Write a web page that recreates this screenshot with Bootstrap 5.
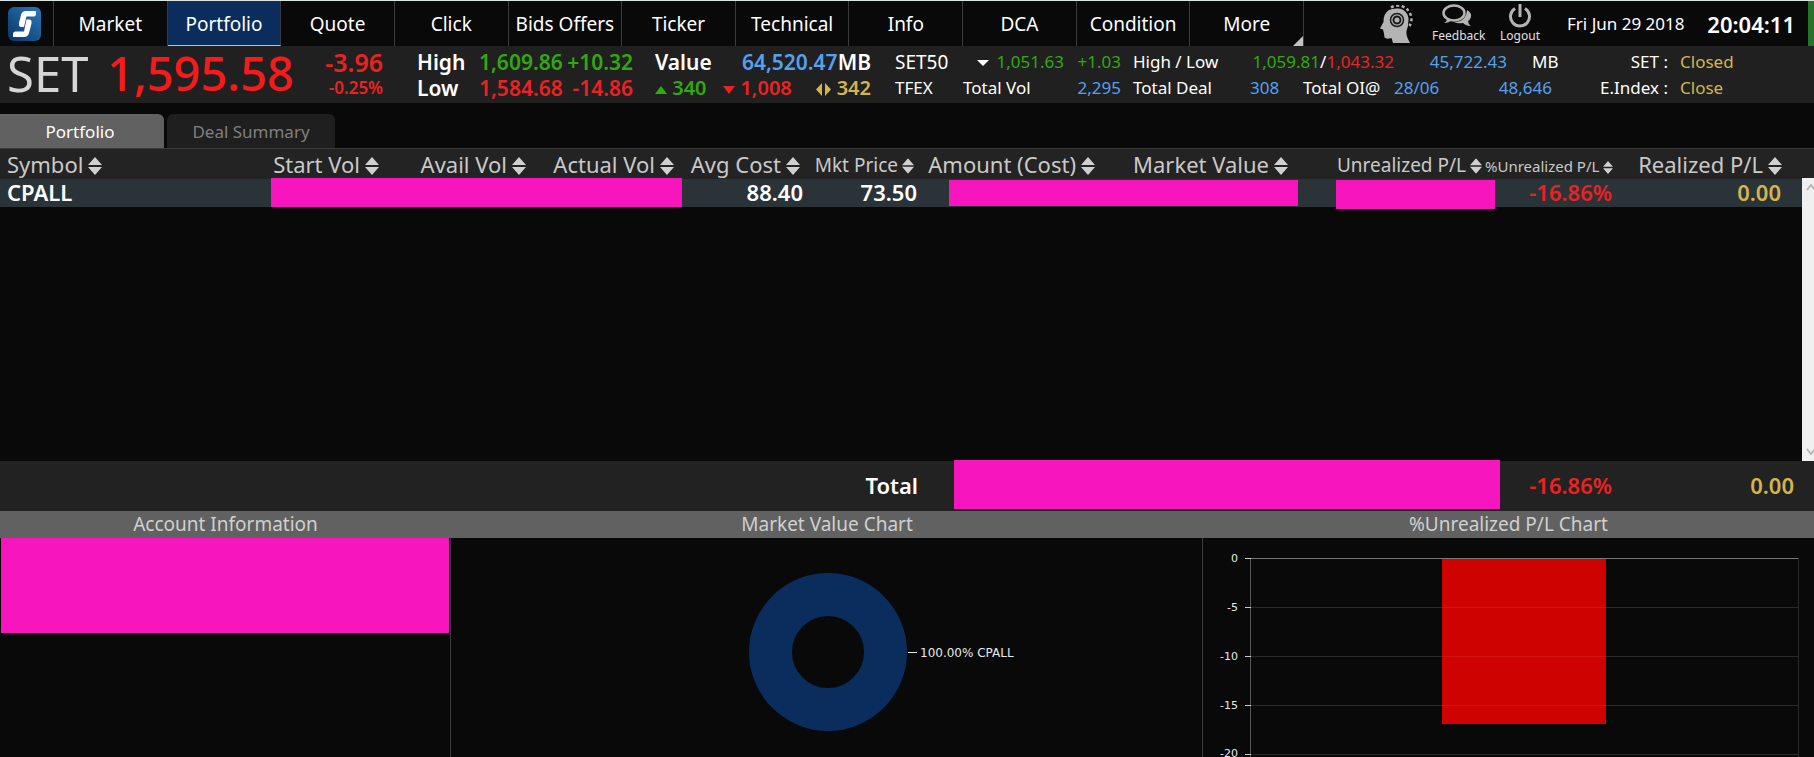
<!DOCTYPE html>
<html lang="en">
<head>
<meta charset="utf-8">
<meta name="viewport" content="width=device-width, initial-scale=1">
<title>Portfolio</title>
<link href="https://cdn.jsdelivr.net/npm/bootstrap@5.3.0/dist/css/bootstrap.min.css" rel="stylesheet">
<style>
:root{--ink:#090909;--bar:#202020;--line:#3c3c3c;--up:#32a80f;--down:#eb2222;--blue:#56a0ee;--gold:#d2b54c;--soft:#c9c9c9;--mask:#f715bd}
body{font-family:"Noto Sans",sans-serif;background:var(--ink);color:#fff;font-size:17px;line-height:26px}
.screen{height:100vh;min-height:700px;border-top:1px solid #dde6e0}
.up{color:var(--up)}.down{color:var(--down)}.blue{color:var(--blue)}.gold{color:var(--gold)}
.strong{font-weight:600}
/* top bar */
.topbar{height:45px}
.logo{width:54px;padding-left:8px;border-right:1px solid var(--line)}
.topbar .nav-link{flex:1 1 0;min-width:0;padding:0;line-height:46px;font-size:19px;color:#fff;text-align:center;white-space:nowrap;border-right:1px solid var(--line);position:relative}
.topbar .nav-link.active{background:#0a2d5e;border-bottom:1px solid #b9c0c8}
.more::after{content:"";position:absolute;right:0;bottom:0;border:solid transparent;border-width:0 0 10px 10px;border-bottom-color:#c4c4c4}
.tools{width:510px;padding-left:76px;border-right:6px solid #24752a}
.tool{background:none;border:0;padding:0;color:#b4b4b4;font-size:12px;line-height:16px;text-align:center}
.tool span{display:block;color:#e0e0e0}
.tool svg{display:block;margin:0 auto}
.feedback{width:50px;margin-left:18px}
.logout{width:40px;margin-left:18px}
.day{margin-left:27px}
.clock{font-size:22px;margin-left:auto;margin-right:13px}
/* index ticker */
.ticker{height:57px;background:var(--bar);white-space:nowrap}
.tgrid{display:grid;grid-template-rows:26px 26px;padding-top:3px}
.tgrid>*{min-width:0}
.main-name{width:107px;padding-left:7px;font-size:49px;line-height:54px;color:#d6d6d6}
.main-value{width:193px;font-size:47px;line-height:55px;font-weight:500;color:#f31b1b}
.change{width:83px;font-size:25px}
.change small{font-size:17px}
.hilo{width:216px;margin-left:34px;grid-template-columns:62px 85px 1fr;font-size:21px}
.turnover{width:216px;margin-left:22px;font-size:21px}
.count{font-size:20px}
.futures{flex:1;margin-left:24px}
.quote-row{display:grid}
.quote-row>*{min-width:0}
.quote-row.set50{grid-template-columns:68fr 101fr 57fr 12fr 112fr 75fr 5fr 69fr 113fr 25fr 60fr 76fr 12fr 134fr}
.quote-row.tfex{grid-template-columns:68fr 101fr 57fr 12fr 117fr 53fr 91fr 60fr 98fr 116fr 12fr 134fr}
.set50>:first-child{font-size:19px}
/* tabs */
.tabs{margin-top:11px;height:34px;gap:3px}
.tabs .nav-link{width:164px;padding:0 4px 0 0;line-height:35px;text-align:center;color:#808080;background:#1f1f1f;border-radius:0 6px 0 0;border:0;font-size:17px}
.tabs .nav-link+.nav-link{width:168px;padding:0;border-radius:6px 6px 0 0}
.tabs .nav-link.active{background:#616161;color:#fff}
/* holdings */
.holdings{flex:1 1 0;min-height:0;position:relative;overflow:hidden}
.grid{table-layout:fixed;width:100%;border-collapse:collapse;white-space:nowrap}
.grid th{height:30px;padding:0 3px 0 0;background:#232323;border-top:1px solid #393939;color:var(--soft);font-weight:400;font-size:22px;line-height:29px;text-align:right;vertical-align:bottom}
.grid th.mid{font-size:19px;line-height:27px}.grid th.slim{font-size:15px;line-height:25px}
.grid th:first-child,.grid td:first-child{text-align:left;padding-left:7px}
.grid td{height:28px;padding:0 4px 0 0;background:#2a3438;font-size:22px;line-height:26px;text-align:right;vertical-align:top;position:relative}
.grid td.tight{padding-right:0}
.sort{width:14px;height:18px;fill:#d0d0d0;margin-left:5px;vertical-align:-2px}
.mid .sort{width:12px;height:16px;margin-left:4px}
.slim .sort{width:10px;height:13px;margin-left:4px}
.mask{position:absolute;background:var(--mask);z-index:1}
.mask-vol{left:11px;right:-5px;top:-1px;bottom:0}
.mask-amt{left:32px;right:-7px;top:1px;bottom:1px}
.mask-pl{left:45px;right:-10px;top:1px;bottom:-2px}
.scroller{position:absolute;right:0;top:30px;bottom:0;width:12px;background:#f0f0f0;overflow:hidden}
.scroller svg{display:block;margin-left:4px}
.total{height:50px;background:#222;font-size:22px;line-height:48px;text-align:right;display:grid;grid-template-columns:918fr 36fr 546fr 112fr 182fr 20fr}
.total .hidden-sum{background:var(--mask);height:49px;margin-top:-1px;position:relative}
/* lower panels */
.panels{display:grid;grid-template-columns:451fr 752fr 611fr}
.panel-title{margin:0;background:#616161;color:#d0d0d0;font-size:19px;font-weight:400;line-height:27px;text-align:center}
.panel-body{height:219px;border-right:1px solid var(--line);overflow:hidden}
.panels>:last-child .panel-body{border-right:0}
.account{height:95px;margin:0 1px;background:var(--mask)}
.panel-body svg{display:block;width:100%;height:219px}
.panel-body text{font-family:"DejaVu Sans",sans-serif;font-size:11px;fill:#e8e8e8}
.panel-body .slice-label{font-size:12px}
</style>
</head>
<body>
<svg class="d-none"><symbol id="sort" viewBox="0 0 14 18"><path d="M7 0 14 8H0zM7 18 0 10h14z"/></symbol></svg>
<div class="screen d-flex flex-column overflow-hidden">
<header class="topbar d-flex flex-shrink-0">
  <div class="logo d-flex align-items-center">
    <svg width="33" height="34" viewBox="0 0 33 34" role="img" aria-label="S logo"><defs><linearGradient id="lg" x1="0" y1="1" x2="1" y2="0"><stop offset="0" stop-color="#0b3468"/><stop offset="1" stop-color="#2a7bb8"/></linearGradient></defs><rect width="33" height="34" rx="6" fill="url(#lg)"/><path d="M28 4H18q-4 0-5 4l-2 8q-.5 4 2 4h3l2.500-10.500H26q1.500 0 2-2z" fill="#fff"/><path d="M5 30h11q4 0 5-4l2.500-9.500q.5-4-2-4h-3L16 24.500H7.500q-2 0-2.500 2z" fill="#fff"/></svg>
  </div>
  <nav class="d-flex flex-grow-1">
    <a class="nav-link" href="#">Market</a><a class="nav-link active" href="#">Portfolio</a><a class="nav-link" href="#">Quote</a><a class="nav-link" href="#">Click</a><a class="nav-link" href="#">Bids Offers</a><a class="nav-link" href="#">Ticker</a><a class="nav-link" href="#">Technical</a><a class="nav-link" href="#">Info</a><a class="nav-link" href="#">DCA</a><a class="nav-link" href="#">Condition</a><a class="nav-link more" href="#">More</a>
  </nav>
  <div class="tools d-flex align-items-center flex-shrink-0">
    <button class="tool" type="button" aria-label="Assistant"><svg width="34" height="38" viewBox="0 0 34 38"><path d="M9 5Q13 3 18 3.500A11 11 0 0 1 28.500 15q0 6-2 11-1 4 3.500 12H13l-1.500-5q-5 1.500-7-.5l-.5-4-1-4-3-1L3.500 17Q3 9 9 5z" fill="#b4b4b4"/><circle cx="17" cy="15" r="6.500" fill="none" stroke="#1a1a1a" stroke-width="1.500"/><circle cx="17" cy="15" r="3.500" fill="#b4b4b4" stroke="#1a1a1a" stroke-width="2"/><path d="M11 2.500A13.500 13.500 0 0 1 29.500 21" fill="none" stroke="#b4b4b4" stroke-width="2.500" stroke-dasharray="3 2.500"/></svg></button>
    <button class="tool feedback" type="button"><svg width="30" height="24" viewBox="0 0 30 24"><ellipse cx="12" cy="9" rx="10.500" ry="7.500" fill="none" stroke="#b4b4b4" stroke-width="2.500"/><path d="M5 14q0 4-3 5 5 0 8-3z" fill="#b4b4b4"/><path d="M25 6q5 3 4 7-1 3-3 4 0 3 3 5-5 0-8-3-5 1-9-1 12 0 13-12z" fill="#b4b4b4"/></svg><span>Feedback</span></button>
    <button class="tool logout" type="button"><svg width="24" height="24" viewBox="0 0 24 24" fill="none" stroke="#b4b4b4" stroke-width="3"><path d="M7 4.500a9.500 9.500 0 1 0 10 0M12 0v13"/></svg><span>Logout</span></button>
    <span class="day">Fri Jun 29 2018</span><span class="clock strong">20:04:11</span>
  </div>
</header>

<section class="ticker d-flex flex-shrink-0">
  <div class="main-name">SET</div><div class="main-value">1,595.58</div>
  <div class="change tgrid text-end down strong"><span>-3.96</span><small>-0.25%</small></div>
  <div class="hilo tgrid strong"><span>High</span><span class="up">1,609.86</span><span class="up text-end">+10.32</span><span>Low</span><span class="down">1,584.68</span><span class="down text-end">-14.86</span></div>
  <div class="turnover tgrid strong"><div class="d-flex"><span class="me-auto">Value</span><span class="blue">64,520.47</span><span>MB</span></div>
    <div class="count d-flex justify-content-between"><span class="up"><svg width="12" height="8"><path d="M0 8 6 0l6 8z" fill="#32a80f"/></svg> 340</span><span class="down"><svg width="12" height="8"><path d="M0 0h12L6 8z" fill="#eb2222"/></svg> 1,008</span><span class="gold ms-2"><svg width="15" height="13"><path d="M6 0v13L0 6.500zM9 0v13l6-6.500z" fill="#d2b54c"/></svg> 342</span></div></div>
  <div class="futures tgrid">
    <div class="quote-row set50"><span>SET50</span><span class="text-end up"><svg class="me-2" width="12" height="8"><path d="M0 1h12L6 7z" fill="#fff"/></svg>1,051.63</span><span class="text-end up">+1.03</span><span></span><span>High / Low</span><span class="text-end up">1,059.81</span><span>/</span><span class="text-end down">1,043.32</span><span class="text-end blue">45,722.43</span><span></span><span>MB</span><span class="text-end">SET :</span><span></span><span class="gold">Closed</span></div>
    <div class="quote-row tfex"><span>TFEX</span><span>Total Vol</span><span class="text-end blue">2,295</span><span></span><span>Total Deal</span><span class="blue">308</span><span>Total OI@</span><span class="blue">28/06</span><span class="text-end blue">48,646</span><span class="text-end">E.Index :</span><span></span><span class="gold">Close</span></div>
  </div>
</section>

<nav class="tabs d-flex flex-shrink-0"><a class="nav-link active" href="#">Portfolio</a><a class="nav-link" href="#">Deal Summary</a></nav>

<main class="holdings">
  <table class="grid">
    <colgroup><col style="width:260px"><col style="width:122px"><col style="width:147px"><col style="width:148px"><col style="width:126px"><col style="width:114px"><col style="width:181px"><col style="width:193px"><col style="width:194px"><col style="width:131px"><col style="width:169px"><col style="width:29px"></colgroup>
    <thead><tr>
      <th scope="col">Symbol<svg class="sort"><use href="#sort"/></svg></th><th scope="col">Start Vol<svg class="sort"><use href="#sort"/></svg></th><th scope="col">Avail Vol<svg class="sort"><use href="#sort"/></svg></th><th scope="col">Actual Vol<svg class="sort"><use href="#sort"/></svg></th><th scope="col">Avg Cost<svg class="sort"><use href="#sort"/></svg></th><th scope="col" class="mid">Mkt Price<svg class="sort" viewBox="0 0 14 18"><use href="#sort" width="14" height="18"/></svg></th><th scope="col">Amount (Cost)<svg class="sort"><use href="#sort"/></svg></th><th scope="col">Market Value<svg class="sort"><use href="#sort"/></svg></th><th scope="col" class="mid">Unrealized P/L<svg class="sort" viewBox="0 0 14 18"><use href="#sort" width="14" height="18"/></svg></th><th scope="col" class="slim">%Unrealized P/L<svg class="sort" viewBox="0 0 14 18"><use href="#sort" width="14" height="18"/></svg></th><th scope="col">Realized P/L<svg class="sort"><use href="#sort"/></svg></th><th></th>
    </tr></thead>
    <tbody><tr>
      <td class="strong">CPALL</td><td colspan="3"><div class="mask mask-vol"></div></td><td class="strong tight">88.40</td><td class="strong tight">73.50</td><td colspan="2"><div class="mask mask-amt"></div></td><td><div class="mask mask-pl"></div></td><td class="down strong">-16.86%</td><td class="gold strong">0.00</td><td></td>
    </tr></tbody>
  </table>
  <div class="scroller d-flex flex-column justify-content-between" aria-hidden="true"><svg width="8" height="16"><path d="M1 12 5 7l4 5" fill="none" stroke="#b5b5b5" stroke-width="2"/></svg><svg width="8" height="16"><path d="m1 4 4 5 4-5" fill="none" stroke="#b5b5b5" stroke-width="2"/></svg></div>
</main>
<div class="total flex-shrink-0 strong"><span>Total</span><span></span><span class="hidden-sum"></span><span class="down">-16.86%</span><span class="gold">0.00</span></div>

<section class="panels flex-shrink-0">
  <div><h2 class="panel-title">Account Information</h2><div class="panel-body"><div class="account"></div></div></div>
  <div><h2 class="panel-title">Market Value Chart</h2><div class="panel-body">
    <svg viewBox="0 0 751 219" role="img" aria-label="Market value by symbol"><circle cx="377" cy="114" r="57.500" fill="none" stroke="#0a2d5e" stroke-width="43"/><path d="M457 114.500h9" stroke="#e8e8e8"/><text class="slice-label" x="469" y="119">100.00% CPALL</text></svg></div></div>
  <div><h2 class="panel-title">%Unrealized P/L Chart</h2><div class="panel-body">
    <svg viewBox="0 0 611 219" role="img" aria-label="Unrealized profit and loss by symbol">
      <path d="M47 69.500h548M47 118.500h548M47 167.500h548M47 216.500h548M595.500 20v199" stroke="#2a2a2a"/>
      <path d="M47.500 20v199" stroke="#555"/>
      <rect x="239" y="20" width="164" height="166" fill="#cf0202"/>
      <path d="M239 69.500h164M239 118.500h164M239 167.500h164" stroke="#d61212"/>
      <path d="M47 20.500h548" stroke="#777"/>
      <path d="M42 20.500h6M42 69.500h6M42 118.500h6M42 167.500h6M42 216.500h6" stroke="#ccc"/>
      <g text-anchor="end"><text x="35" y="24">0</text><text x="35" y="73">-5</text><text x="35" y="122">-10</text><text x="35" y="171">-15</text><text x="35" y="219">-20</text></g>
    </svg></div></div>
</section>
</div>
<script src="https://cdn.jsdelivr.net/npm/bootstrap@5.3.0/dist/js/bootstrap.bundle.min.js"></script>
</body>
</html>
